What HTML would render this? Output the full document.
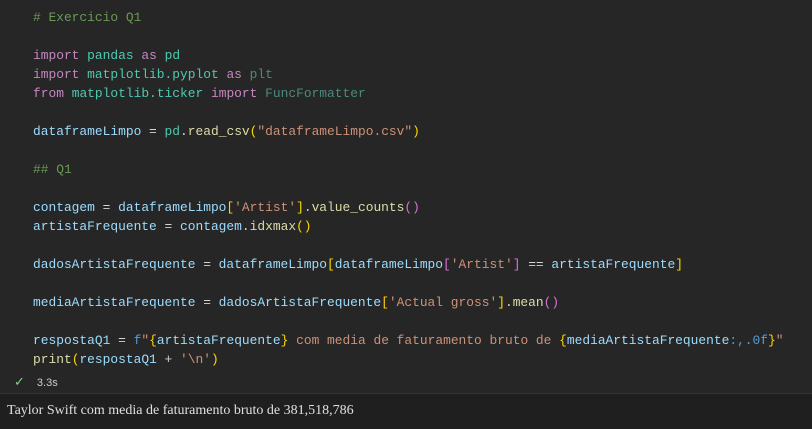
<!DOCTYPE html>
<html><head><style>
body{margin:0;width:812px;height:428px;background:#262626;overflow:hidden;position:relative}
pre{margin:0;position:absolute;left:33px;top:8px;font-family:"Liberation Mono",monospace;font-size:12.9px;line-height:19px;color:#9cdcfe}
.k{color:#c586c0}.m{color:#4ec9b0}.d{color:#4a8a7c}.c{color:#6a9955}.s{color:#ce9178}.f{color:#dcdcaa}.y{color:#ffd700}.p{color:#da70d6}.b{color:#179fff}.w{color:#d4d4d4}.v{color:#569cd6}
#st{position:absolute;left:14px;top:374px;font-family:"Liberation Sans",sans-serif;font-size:11px;color:#ccc}
#st span{color:#89d185;margin-right:12px;font-size:13px}
#out{position:absolute;left:0;top:393px;width:812px;height:35px;background:#1f1f1f;border-top:1px solid #333}
#out div{position:absolute;left:7px;top:9px;font-family:"Liberation Serif",serif;font-size:14px;color:#e0e0e0}
</style></head><body>
<pre><span class="c"># Exercicio Q1</span>

<span class="k">import</span> <span class="m">pandas</span> <span class="k">as</span> <span class="m">pd</span>
<span class="k">import</span> <span class="m">matplotlib.pyplot</span> <span class="k">as</span> <span class="d">plt</span>
<span class="k">from</span> <span class="m">matplotlib.ticker</span> <span class="k">import</span> <span class="d">FuncFormatter</span>

dataframeLimpo <span class="w">=</span> <span class="m">pd</span><span class="w">.</span><span class="f">read_csv</span><span class="y">(</span><span class="s">"dataframeLimpo.csv"</span><span class="y">)</span>

<span class="c">## Q1</span>

contagem <span class="w">=</span> dataframeLimpo<span class="y">[</span><span class="s">'Artist'</span><span class="y">]</span><span class="w">.</span><span class="f">value_counts</span><span class="p">()</span>
artistaFrequente <span class="w">=</span> contagem<span class="w">.</span><span class="f">idxmax</span><span class="y">()</span>

dadosArtistaFrequente <span class="w">=</span> dataframeLimpo<span class="y">[</span>dataframeLimpo<span class="p">[</span><span class="s">'Artist'</span><span class="p">]</span> <span class="w">==</span> artistaFrequente<span class="y">]</span>

mediaArtistaFrequente <span class="w">=</span> dadosArtistaFrequente<span class="y">[</span><span class="s">'Actual gross'</span><span class="y">]</span><span class="w">.</span><span class="f">mean</span><span class="p">()</span>

respostaQ1 <span class="w">=</span> <span class="v">f</span><span class="s">"</span><span class="y">{</span>artistaFrequente<span class="y">}</span><span class="s"> com media de faturamento bruto de </span><span class="y">{</span>mediaArtistaFrequente<span class="v">:,.0f</span><span class="y">}</span><span class="s">"</span>
<span class="f">print</span><span class="y">(</span>respostaQ1 <span class="w">+</span> <span class="s">'\n'</span><span class="y">)</span></pre>
<div id="st"><span>✓</span>3.3s</div>
<div id="out"><div>Taylor Swift com media de faturamento bruto de 381,518,786</div></div>
</body></html>
